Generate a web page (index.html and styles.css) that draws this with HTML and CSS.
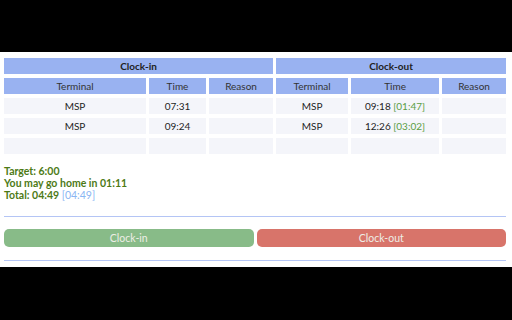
FILE: index.html
```html
<!DOCTYPE html>
<html>
<head>
<meta charset="utf-8">
<link rel="stylesheet" href="styles.css">
</head>
<body>
<div class="page">
  <table class="log">
    <colgroup>
      <col class="c1"><col class="c2"><col class="c3"><col class="c4"><col class="c5"><col class="c6">
    </colgroup>
    <tr class="group">
      <th colspan="3">Clock-in</th>
      <th colspan="3">Clock-out</th>
    </tr>
    <tr class="heads">
      <th>Terminal</th><th>Time</th><th>Reason</th>
      <th>Terminal</th><th>Time</th><th>Reason</th>
    </tr>
    <tr>
      <td>MSP</td><td>07:31</td><td></td>
      <td>MSP</td><td>09:18 <span class="dur">[01:47]</span></td><td></td>
    </tr>
    <tr>
      <td>MSP</td><td>09:24</td><td></td>
      <td>MSP</td><td>12:26 <span class="dur">[03:02]</span></td><td></td>
    </tr>
    <tr>
      <td></td><td></td><td></td>
      <td></td><td></td><td></td>
    </tr>
  </table>
  <div class="info">
    <div>Target: 6:00</div>
    <div>You may go home in 01:11</div>
    <div>Total: 04:49 <span class="alt">[04:49]</span></div>
  </div>
  <div class="rule"></div>
  <div class="actions">
    <button class="btn in">Clock-in</button>
    <button class="btn out">Clock-out</button>
  </div>
  <div class="rule rule2"></div>
</div>
</body>
</html>
```
FILE: styles.css
```css
html, body {
  margin: 0;
  padding: 0;
  background: #000;
}
body {
  font-family: Lato, "Open Sans", sans-serif;
  font-size: 10px;
  color: #222;
}
.page {
  margin-top: 52px;
  height: 215px;
  background: #fff;
  padding: 2px 3px 0 1px;
  box-sizing: border-box;
}
.log {
  width: 508px;
  table-layout: fixed;
  border-collapse: separate;
  border-spacing: 3px 4px;
}
.c1 { width: 142px; }
.c2 { width: 57px; }
.c3 { width: 64px; }
.c4 { width: 72px; }
.c5 { width: 88px; }
.c6 { width: 64px; }
.log th, .log td {
  height: 16px;
  padding: 0;
  text-align: center;
  vertical-align: middle;
  line-height: 16px;
}
.log th {
  background: #99b2f1;
  color: #333;
  font-weight: normal;
}
.group th {
  font-weight: bold;
  color: #222;
}
.log td {
  background: #f4f5fa;
  color: #1e1e1e;
}
.dur {
  color: #5a9d44;
}
.info {
  margin: 7px 3px 0 3px;
  color: #4d7a16;
  font-weight: bold;
  font-size: 10.5px;
  line-height: 12px;
  height: 36px;
}
.alt {
  color: #8ab6f3;
  font-weight: normal;
}
.rule {
  margin: 15px 3px 0 3px;
  height: 1px;
  background: #b4c5f5;
}
.actions {
  display: flex;
  gap: 3px;
  margin: 12px 3px 0 3px;
  height: 18px;
}
.btn {
  flex: 1;
  height: 18px;
  border: 0;
  border-radius: 5px;
  font-family: Lato, "Open Sans", sans-serif;
  font-size: 10.5px;
  color: #eeeee6;
  padding: 0;
  line-height: 18px;
}
.btn.in {
  background: #88bb88;
}
.btn.out {
  background: #d8746a;
}
.rule2 {
  margin-top: 13px;
}
```
